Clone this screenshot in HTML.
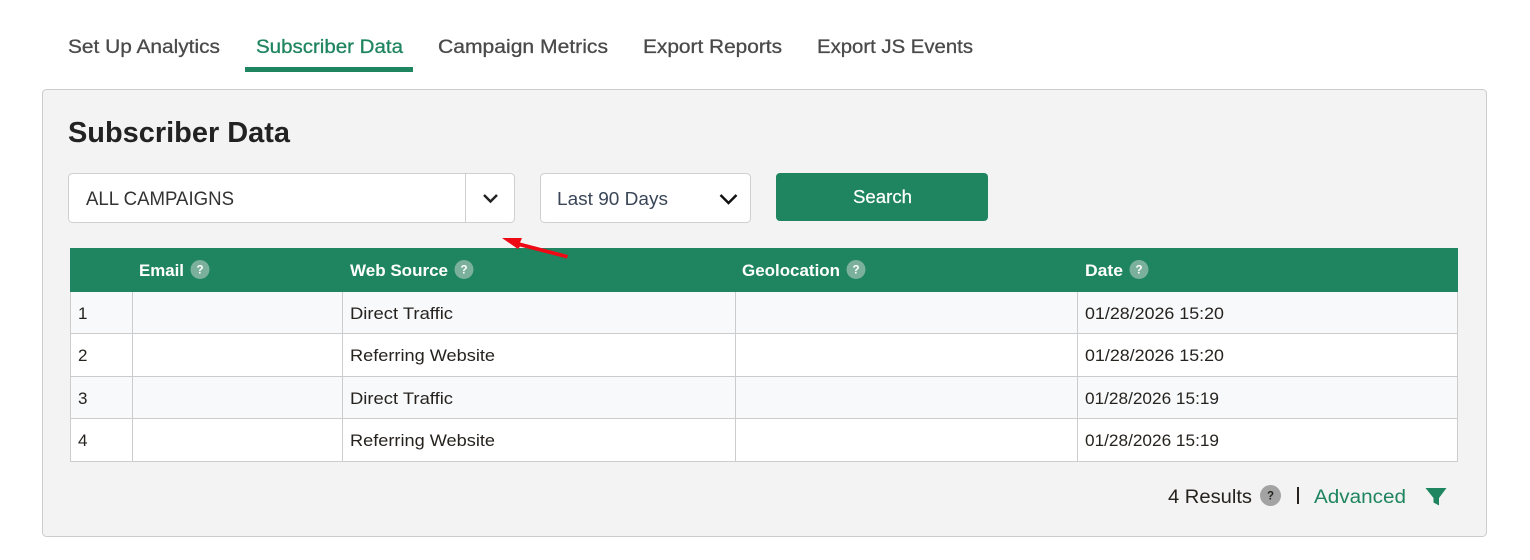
<!DOCTYPE html>
<html lang="en">
<head>
<meta charset="utf-8">
<title>Subscriber Data</title>
<style>
html,body{margin:0;padding:0;background:#fff;width:1530px;height:560px;overflow:hidden}
svg{display:block}
text{font-family:"Liberation Sans",Arial,sans-serif}
.tab{font-size:19.5px;fill:#4a4a4a;stroke:#4a4a4a;stroke-width:.3px}
.cell{font-size:17px;fill:#26231f}
.th{font-size:17px;font-weight:700;fill:#fff}
.q{font-size:11.5px;font-weight:700;fill:#fff;text-anchor:middle}
</style>
</head>
<body>
<svg width="1530" height="560" viewBox="0 0 1530 560" xmlns="http://www.w3.org/2000/svg">
<rect width="1530" height="560" fill="#fff"/>

<!-- tabs -->
<text class="tab" x="68" y="53" textLength="152" lengthAdjust="spacingAndGlyphs">Set Up Analytics</text>
<text class="tab" x="256" y="53" textLength="147" lengthAdjust="spacingAndGlyphs" style="fill:#1f8560;stroke:#1f8560">Subscriber Data</text>
<text class="tab" x="438" y="53" textLength="170" lengthAdjust="spacingAndGlyphs">Campaign Metrics</text>
<text class="tab" x="643" y="53" textLength="139" lengthAdjust="spacingAndGlyphs">Export Reports</text>
<text class="tab" x="817" y="53" textLength="156" lengthAdjust="spacingAndGlyphs">Export JS Events</text>
<rect x="245" y="67" width="168" height="5" fill="#1f8560"/>

<!-- panel -->
<rect x="42.5" y="89.5" width="1444" height="447" rx="4" fill="#f3f3f3" stroke="#cccccc"/>
<text x="68" y="142" font-size="28.5" font-weight="700" fill="#222" textLength="222" lengthAdjust="spacingAndGlyphs">Subscriber Data</text>

<!-- campaign select -->
<rect x="68.5" y="173.5" width="446" height="49" rx="4" fill="#fff" stroke="#cfcfcf"/>
<line x1="465.5" y1="174" x2="465.5" y2="222" stroke="#cfcfcf"/>
<text x="86" y="205" font-size="19" fill="#333" textLength="148" lengthAdjust="spacingAndGlyphs">ALL CAMPAIGNS</text>
<path d="M484 195 L490.5 201.5 L497 195" fill="none" stroke="#222" stroke-width="2.5"/>

<!-- date select -->
<rect x="540.5" y="173.5" width="210" height="49" rx="4" fill="#fff" stroke="#cfcfcf"/>
<text x="557" y="205" font-size="18.5" fill="#3a4658" textLength="111" lengthAdjust="spacingAndGlyphs">Last 90 Days</text>
<path d="M720.5 195 L728.5 203 L736.5 195" fill="none" stroke="#111" stroke-width="2.5"/>

<!-- search -->
<rect x="776" y="173" width="212" height="48" rx="4" fill="#1f8560"/>
<text x="853" y="203" font-size="18" fill="#fff" stroke="#fff" stroke-width=".2" textLength="59" lengthAdjust="spacingAndGlyphs">Search</text>

<!-- table -->
<rect x="70" y="292" width="1388" height="42" fill="#f8f9fb"/>
<rect x="70" y="334" width="1388" height="43" fill="#fff"/>
<rect x="70" y="377" width="1388" height="42" fill="#f8f9fb"/>
<rect x="70" y="419" width="1388" height="42" fill="#fff"/>
<g stroke="#cccccc" stroke-width="1">
<line x1="70.5" y1="292" x2="70.5" y2="462"/>
<line x1="132.5" y1="292" x2="132.5" y2="462"/>
<line x1="342.5" y1="292" x2="342.5" y2="462"/>
<line x1="735.5" y1="292" x2="735.5" y2="462"/>
<line x1="1077.5" y1="292" x2="1077.5" y2="462"/>
<line x1="1457.5" y1="292" x2="1457.5" y2="462"/>
<line x1="70" y1="333.5" x2="1458" y2="333.5"/>
<line x1="70" y1="376.5" x2="1458" y2="376.5"/>
<line x1="70" y1="418.5" x2="1458" y2="418.5"/>
<line x1="70" y1="461.5" x2="1458" y2="461.5"/>
</g>
<rect x="70" y="248" width="1388" height="44" fill="#1f8560"/>

<text class="th" x="139" y="276" textLength="45" lengthAdjust="spacingAndGlyphs">Email</text>
<circle cx="200" cy="269.5" r="9.5" fill="#7bb09c"/><text class="q" x="200" y="273.5">?</text>
<text class="th" x="350" y="276" textLength="98" lengthAdjust="spacingAndGlyphs">Web Source</text>
<circle cx="464" cy="269.5" r="9.5" fill="#7bb09c"/><text class="q" x="464" y="273.5">?</text>
<text class="th" x="742" y="276" textLength="98" lengthAdjust="spacingAndGlyphs">Geolocation</text>
<circle cx="856" cy="269.5" r="9.5" fill="#7bb09c"/><text class="q" x="856" y="273.5">?</text>
<text class="th" x="1085" y="276" textLength="38" lengthAdjust="spacingAndGlyphs">Date</text>
<circle cx="1139" cy="269.5" r="9.5" fill="#7bb09c"/><text class="q" x="1139" y="273.5">?</text>

<text class="cell" x="78" y="319">1</text>
<text class="cell" x="350" y="319" textLength="103" lengthAdjust="spacingAndGlyphs">Direct Traffic</text>
<text class="cell" x="1085" y="319" textLength="139" lengthAdjust="spacingAndGlyphs">01/28/2026 15:20</text>

<text class="cell" x="78" y="361">2</text>
<text class="cell" x="350" y="361" textLength="145" lengthAdjust="spacingAndGlyphs">Referring Website</text>
<text class="cell" x="1085" y="361" textLength="139" lengthAdjust="spacingAndGlyphs">01/28/2026 15:20</text>

<text class="cell" x="78" y="404">3</text>
<text class="cell" x="350" y="404" textLength="103" lengthAdjust="spacingAndGlyphs">Direct Traffic</text>
<text class="cell" x="1085" y="404" textLength="134" lengthAdjust="spacingAndGlyphs">01/28/2026 15:19</text>

<text class="cell" x="78" y="446">4</text>
<text class="cell" x="350" y="446" textLength="145" lengthAdjust="spacingAndGlyphs">Referring Website</text>
<text class="cell" x="1085" y="446" textLength="134" lengthAdjust="spacingAndGlyphs">01/28/2026 15:19</text>

<!-- arrow -->
<path d="M502 238 L522 238 L520 242.5 L568 255 L567 258.5 L520 246.5 L518 249 Z" fill="#ee0a14"/>

<!-- footer -->
<text x="1168" y="503" font-size="19" fill="#26231f" textLength="84" lengthAdjust="spacingAndGlyphs">4 Results</text>
<circle cx="1270.5" cy="495.5" r="10.5" fill="#a3a3a3"/><text class="q" x="1270.5" y="499.5" style="fill:#26231f">?</text>
<rect x="1297" y="487" width="2" height="17" fill="#26231f"/>
<text x="1314" y="503" font-size="19" fill="#1f8560" textLength="92" lengthAdjust="spacingAndGlyphs">Advanced</text>
<path d="M1425.5 488 H1446.5 L1439 498 V505.5 L1433.5 502.5 V498 Z" fill="#1f8560"/>
</svg>
</body>
</html>
